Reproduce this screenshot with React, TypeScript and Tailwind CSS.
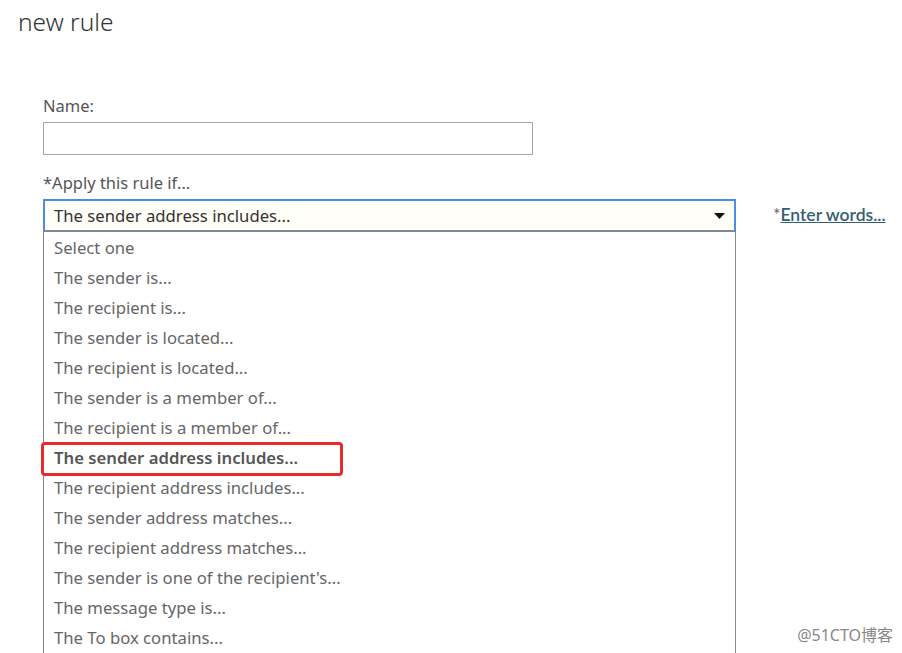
const options = [
  'Select one',
  'The sender is...',
  'The recipient is...',
  'The sender is located...',
  'The recipient is located...',
  'The sender is a member of...',
  'The recipient is a member of...',
  'The sender address includes...',
  'The recipient address includes...',
  'The sender address matches...',
  'The recipient address matches...',
  "The sender is one of the recipient's...",
  'The message type is...',
  'The To box contains...',
];

const selected = 'The sender address includes...';

export default function App() {
  return (
    <div className="relative w-[902px] h-[653px] overflow-hidden bg-white font-['Noto_Sans',sans-serif]">
      <h1 className="pl-[18px] pt-[6px] text-[24.5px] font-light leading-[32px] text-[#333]">new rule</h1>

      <div className="pl-[43px] pt-[57px]">
        <label className="block text-[16.5px] leading-[22px] text-[#555]">Name:</label>
        <input className="mt-[5px] block h-[33px] w-[490px] border border-[#a6a6a6] bg-white outline-none" />

        <div className="mt-[17px] text-[16.5px] leading-[22px] text-[#555]">*Apply this rule if...</div>

        <div className="mt-[5px] flex items-start">
          <div className="w-[693px]">
            <div className="flex h-[33px] items-center justify-between border-2 border-[#4a8fdb] border-b-[#7b8b9c] bg-[#fffef7] pl-[9px] pr-[8px]">
              <span className="text-[16.7px] text-[#333]">{selected}</span>
              <svg width="11" height="6" viewBox="0 0 11 6" className="mr-[1px]">
                <path d="M0 0h11L5.5 6z" fill="#111" />
              </svg>
            </div>
            <ul className="w-[693px] border-x border-[#8a8a8a] pt-[1px] pb-[20px]">
              {options.map((o) => (
                <li key={o} className="relative h-[30px] pl-[10px] text-[16.7px] leading-[30px]">
                  {o === selected ? (
                    <>
                      <span className="font-semibold text-[#555]">{o}</span>
                      <span className="absolute left-[-3px] top-[-1px] h-[34px] w-[302px] rounded-[4px] border-[3px] border-[#e62b2b]" />
                    </>
                  ) : (
                    <span className="text-[#666]">{o}</span>
                  )}
                </li>
              ))}
            </ul>
          </div>
          <div className="ml-[37px] mt-[5px] text-[17.5px] leading-[22px] text-[#333] font-['Lato',sans-serif]">
            <span className="text-[#666]">*</span>
            <a className="font-semibold text-[#355f73] underline">Enter words...</a>
          </div>
        </div>
      </div>

      <div className="absolute bottom-[6px] right-[9px] text-[16px] text-[#888] font-['Noto_Sans','Noto_Sans_CJK_SC',sans-serif]">@51CTO博客</div>
    </div>
  );
}
